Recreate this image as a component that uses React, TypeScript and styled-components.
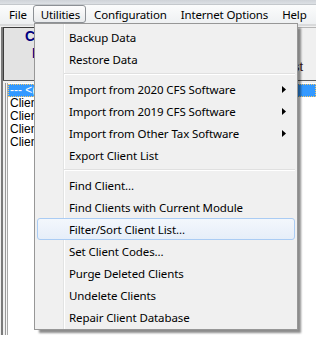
import styled, { createGlobalStyle } from 'styled-components';

const GlobalStyle = createGlobalStyle`
  html, body {
    margin: 0;
    padding: 0;
    background: #fff;
    overflow: hidden;
  }
  body {
    font-family: "Noto Sans", "Open Sans", sans-serif;
    font-size: 12px;
  }
`;

const Screen = styled.div`
  position: relative;
  width: 316px;
  height: 337px;
  overflow: hidden;
  background: #fff;
`;

const TitleStrip = styled.div`
  height: 5px;
  background: linear-gradient(#cfd3d8, #dde1e5);
  border-bottom: 1px solid #c4c8cc;
  box-sizing: border-box;
`;

const MenuBar = styled.div`
  height: 19px;
  display: flex;
  align-items: stretch;
  padding-left: 1px;
  background: linear-gradient(#fbfcfc, #eef0f2);
  color: #000;
`;

const MenuTitle = styled.div<{ $open?: boolean }>`
  display: flex;
  align-items: center;
  padding: 0 5px 0 7px;
  height: 18px;
  box-sizing: border-box;
  border: 1px solid ${(p) => (p.$open ? '#8c9095' : 'transparent')};
  border-radius: 3px;
  background: ${(p) => (p.$open ? 'linear-gradient(#fdfdfd, #e8eaec)' : 'transparent')};
  font-size: 11.5px;
  letter-spacing: -0.15px;
  white-space: nowrap;
`;

const Workspace = styled.div`
  border-top: 2px solid #d9dadb;
  padding: 1px 0 0 0;
  display: flex;
  height: 311px;
  box-sizing: border-box;
  background: #f0f0f0;
`;

const SideRule = styled.div`
  width: 2px;
  margin-left: 1px;
  background: #7a7a7a;
`;

const Frame = styled.div`
  flex: 1;
  display: flex;
  flex-direction: column;
  min-width: 0;
`;

const HeaderRow = styled.div`
  display: flex;
  height: 53px;
  border-bottom: 1px solid #5a5a5a;
`;

const HeaderCell = styled.div`
  width: 120px;
  background: #e3e3e3;
  border-left: 1px solid #3c3c3c;
  border-top: 1px solid #3c3c3c;
  color: #00007f;
  font-family: "Liberation Sans", Arial, sans-serif;
  font-weight: bold;
  font-size: 14px;
  line-height: 17px;
`;

const HeaderLine = styled.div<{ $indent: number }>`
  padding-left: ${(p) => p.$indent}px;
  white-space: nowrap;
`;

const HeaderRest = styled.div`
  flex: 1;
  background: #f0f0f0;
  border-top: 1px solid #b5b5b5;
  display: flex;
  align-items: flex-end;
  justify-content: flex-end;
  padding: 0 13px 6px 0;
  font-family: "Liberation Sans", Arial, sans-serif;
  font-size: 13px;
  color: #3a1c1c;
`;

const ListBox = styled.div`
  margin-top: 2px;
  flex: 1;
  display: flex;
  border-left: 1px solid #9a9a9a;
  margin-left: 2px;
  padding-left: 1px;
  background: #f6f6f6;
`;

const ClientList = styled.div`
  flex: 1;
  background: #fff;
  border-left: 1px solid #a8a8a8;
  padding-top: 1px;
  font-family: "Liberation Sans", Arial, sans-serif;
  font-size: 12px;
`;

const ListRow = styled.div<{ $selected?: boolean }>`
  height: 13px;
  line-height: 13px;
  padding-left: 2px;
  white-space: nowrap;
  color: ${(p) => (p.$selected ? '#fff' : '#000')};
  background: ${(p) => (p.$selected ? '#3399ff' : 'transparent')};
  outline: ${(p) => (p.$selected ? '1px dotted #f6c86a' : 'none')};
  outline-offset: -1px;
`;

const Dropdown = styled.div`
  position: absolute;
  left: 34px;
  top: 23px;
  width: 264px;
  box-sizing: border-box;
  border: 1px solid #979797;
  padding: 2px 2px 1px 2px;
  background: linear-gradient(
    to right,
    #f0f0f0 28px,
    #e2e3e3 28px,
    #e2e3e3 29px,
    #ffffff 29px,
    #ffffff 30px,
    #f0f0f0 30px
  );
  box-shadow: 4px 4px 2px -1px rgba(0, 0, 0, 0.45);
  color: #000;
`;

const Item = styled.div<{ $hover?: boolean }>`
  height: 22px;
  box-sizing: border-box;
  display: flex;
  align-items: center;
  padding-left: 31px;
  border: 1px solid ${(p) => (p.$hover ? '#aaccf4' : 'transparent')};
  border-radius: 3px;
  background: ${(p) => (p.$hover ? 'linear-gradient(#f3f7fc, #e6eef9)' : 'transparent')};
  font-size: 11.5px;
  letter-spacing: -0.1px;
  white-space: nowrap;
`;

const Label = styled.span`
  flex: 1;
`;

const Arrow = styled.svg`
  width: 4px;
  height: 7px;
  margin-right: 8px;
`;

const Separator = styled.div`
  height: 8px;
  display: flex;
  align-items: center;
  padding-left: 27px;

  &::after {
    content: '';
    flex: 1;
    border-top: 1px solid #e0e0e0;
    border-bottom: 1px solid #fff;
    box-sizing: border-box;
    height: 2px;
  }
`;

type Entry = { label: string; sub?: boolean; hover?: boolean } | 'sep';

const entries: Entry[] = [
  { label: 'Backup Data' },
  { label: 'Restore Data' },
  'sep',
  { label: 'Import from 2020 CFS Software', sub: true },
  { label: 'Import from 2019 CFS Software', sub: true },
  { label: 'Import from Other Tax Software', sub: true },
  { label: 'Export Client List' },
  'sep',
  { label: 'Find Client...' },
  { label: 'Find Clients with Current Module' },
  { label: 'Filter/Sort Client List...', hover: true },
  { label: 'Set Client Codes...' },
  { label: 'Purge Deleted Clients' },
  { label: 'Undelete Clients' },
  { label: 'Repair Client Database' },
];

export default function App() {
  return (
    <Screen>
      <GlobalStyle />
      <TitleStrip />
      <MenuBar>
        <MenuTitle>File</MenuTitle>
        <MenuTitle $open>Utilities</MenuTitle>
        <MenuTitle>Configuration</MenuTitle>
        <MenuTitle>Internet Options</MenuTitle>
        <MenuTitle>Help</MenuTitle>
      </MenuBar>
      <Workspace>
        <SideRule />
        <Frame>
          <HeaderRow>
            <HeaderCell>
              <HeaderLine $indent={21}>Client</HeaderLine>
              <HeaderLine $indent={28}>ID</HeaderLine>
            </HeaderCell>
            <HeaderRest>Last</HeaderRest>
          </HeaderRow>
          <ListBox>
            <ClientList>
              <ListRow $selected>--- &lt;(New Client)&gt; ---</ListRow>
              <ListRow>Client 1</ListRow>
              <ListRow>Client 2</ListRow>
              <ListRow>Client 3</ListRow>
              <ListRow>Client 4</ListRow>
            </ClientList>
          </ListBox>
        </Frame>
      </Workspace>
      <Dropdown>
        {entries.map((e, i) =>
          e === 'sep' ? (
            <Separator key={i} />
          ) : (
            <Item key={i} $hover={e.hover}>
              <Label>{e.label}</Label>
              {e.sub && (
                <Arrow viewBox="0 0 4 7">
                  <path d="M0 0 L4 3.5 L0 7 Z" fill="#000" />
                </Arrow>
              )}
            </Item>
          )
        )}
      </Dropdown>
    </Screen>
  );
}
